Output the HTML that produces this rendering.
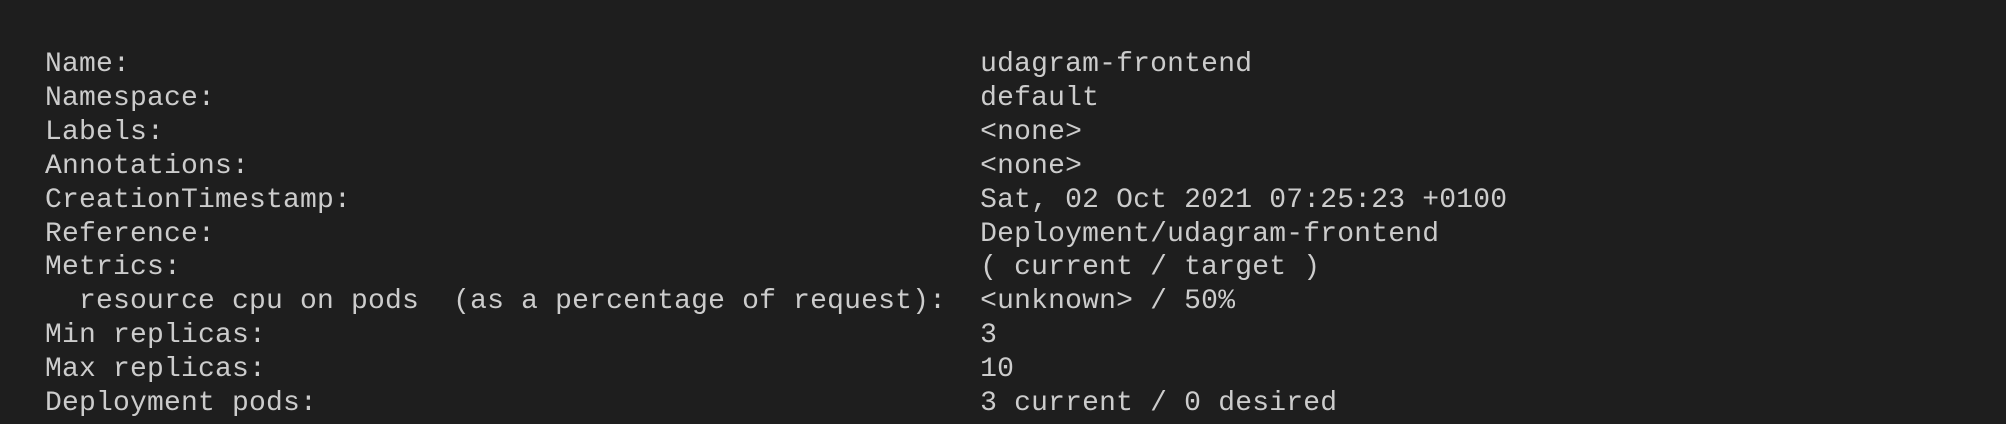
<!DOCTYPE html>
<html><head><style>
html,body{margin:0;padding:0;background:#1e1e1e;width:2006px;height:424px;overflow:hidden}
pre{position:absolute;left:45px;top:48px;margin:0;font-family:"Liberation Mono",monospace;font-size:28px;line-height:33.9px;color:#cccccc;letter-spacing:0.2px}
</style></head><body>
<pre>Name:                                                  udagram-frontend
Namespace:                                             default
Labels:                                                &lt;none&gt;
Annotations:                                           &lt;none&gt;
CreationTimestamp:                                     Sat, 02 Oct 2021 07:25:23 +0100
Reference:                                             Deployment/udagram-frontend
Metrics:                                               ( current / target )
  resource cpu on pods  (as a percentage of request):  &lt;unknown&gt; / 50%
Min replicas:                                          3
Max replicas:                                          10
Deployment pods:                                       3 current / 0 desired</pre>
</body></html>
